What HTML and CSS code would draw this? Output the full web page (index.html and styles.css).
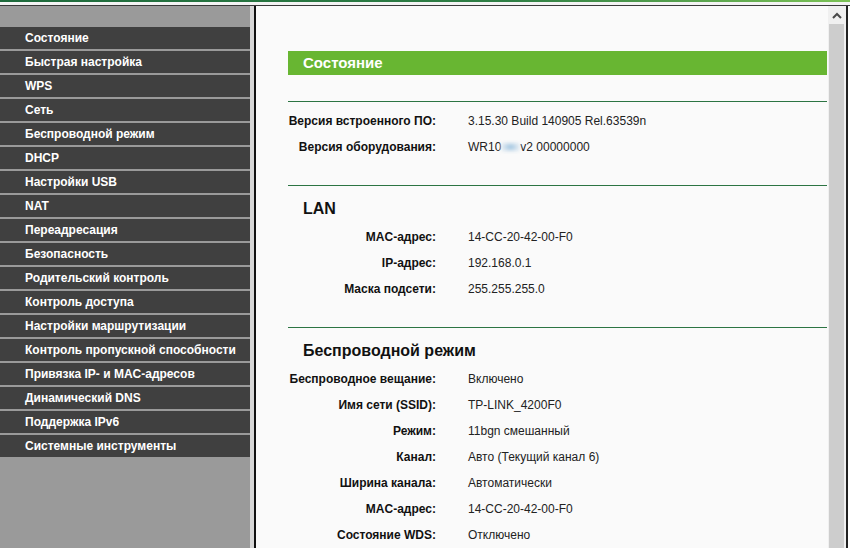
FILE: index.html
```html
<!DOCTYPE html>
<html lang="ru">
<head>
<meta charset="UTF-8">
<title>Состояние</title>
<link rel="stylesheet" href="styles.css">
</head>
<body>

<div class="topline"></div>

<div class="layout">
  <div class="menu">
    <div class="item">Состояние</div>
    <div class="item">Быстрая настройка</div>
    <div class="item">WPS</div>
    <div class="item">Сеть</div>
    <div class="item">Беспроводной режим</div>
    <div class="item">DHCP</div>
    <div class="item">Настройки USB</div>
    <div class="item">NAT</div>
    <div class="item">Переадресация</div>
    <div class="item">Безопасность</div>
    <div class="item">Родительский контроль</div>
    <div class="item">Контроль доступа</div>
    <div class="item">Настройки маршрутизации</div>
    <div class="item">Контроль пропускной способности</div>
    <div class="item">Привязка IP- и MAC-адресов</div>
    <div class="item">Динамический DNS</div>
    <div class="item">Поддержка IPv6</div>
    <div class="item">Системные инструменты</div>
  </div>

  <div class="frame">
    <div class="main">
      <div class="title">Состояние</div>

      <div class="block">
        <div class="rows">
          <div class="lbl">Версия встроенного ПО:</div><div class="val">3.15.30 Build 140905 Rel.63539n</div>
          <div class="lbl">Версия оборудования:</div><div class="val">WR10<span class="blur"></span>v2 00000000</div>
        </div>
      </div>

      <div class="block">
        <h2>LAN</h2>
        <div class="rows">
          <div class="lbl">MAC-адрес:</div><div class="val">14-CC-20-42-00-F0</div>
          <div class="lbl">IP-адрес:</div><div class="val">192.168.0.1</div>
          <div class="lbl">Маска подсети:</div><div class="val">255.255.255.0</div>
        </div>
      </div>

      <div class="block">
        <h2>Беспроводной режим</h2>
        <div class="rows">
          <div class="lbl">Беспроводное вещание:</div><div class="val">Включено</div>
          <div class="lbl">Имя сети (SSID):</div><div class="val">TP-LINK_4200F0</div>
          <div class="lbl">Режим:</div><div class="val">11bgn смешанный</div>
          <div class="lbl">Канал:</div><div class="val">Авто (Текущий канал 6)</div>
          <div class="lbl">Ширина канала:</div><div class="val">Автоматически</div>
          <div class="lbl">MAC-адрес:</div><div class="val">14-CC-20-42-00-F0</div>
          <div class="lbl">Состояние WDS:</div><div class="val">Отключено</div>
        </div>
      </div>
    </div>

    <div class="scroll">
      <div class="arrow">
        <svg width="10" height="7" viewBox="0 0 10 7"><path d="M1 6 L5 2 L9 6" fill="none" stroke="#4a4a4a" stroke-width="2"/></svg>
      </div>
      <div class="thumb"></div>
    </div>
  </div>
</div>

</body>
</html>
```

FILE: styles.css
```css
body {
  margin: 0;
  height: 548px;
  overflow: hidden;
  background: #ffffff;
  font-family: "Liberation Sans", Arial, sans-serif;
  font-size: 12px;
}

.topline {
  height: 2px;
  background: linear-gradient(90deg, #1e6a3c, #2f7f45 60%, #7cc256);
  border-bottom: 3px solid #f4f4f4;
}

.layout {
  display: flex;
  height: 543px;
  border-top: 1px solid #3a3a3a;
}

.menu {
  width: 250px;
  flex: none;
  background: #9a9a9a;
  padding-top: 21px;
  border-right: 4px solid #d6d6d6;
}

.item {
  height: 22px;
  line-height: 22px;
  margin-bottom: 2px;
  padding-left: 25px;
  background: #404040;
  color: #ffffff;
  font-weight: bold;
}

.frame {
  flex: 1;
  display: flex;
  background: #fafafa;
  border-left: 2px solid #111111;
  border-right: 2px solid #222222;
  margin-right: 2px;
}

.main {
  flex: 1;
  padding: 45px 1px 0 32px;
}

.title {
  height: 24px;
  line-height: 24px;
  background: #68b632;
  color: #ffffff;
  font-size: 15px;
  font-weight: bold;
  padding-left: 15px;
  margin-bottom: 26px;
}

.block {
  border-top: 1px solid #2c7443;
  padding: 6px 0 25px;
}

.block h2 {
  margin: 0;
  padding: 7px 0 5px 15px;
  height: 20px;
  line-height: 20px;
  font-size: 16px;
  color: #111111;
}

.rows {
  display: grid;
  grid-template-columns: 148px 1fr;
  column-gap: 32px;
  grid-auto-rows: 26px;
  align-items: center;
}

.lbl {
  text-align: right;
  font-weight: bold;
  color: #111111;
}

.val {
  color: #222222;
}

.blur {
  display: inline-block;
  width: 19px;
  height: 10px;
  vertical-align: -1px;
  background: radial-gradient(ellipse at center, #9cc3e0, #dfe9f1 60%, #f6f8fa);
  filter: blur(1.5px);
}

.scroll {
  width: 18px;
  flex: none;
  display: flex;
  flex-direction: column;
  background: #f0f0f0;
}

.arrow {
  height: 18px;
  display: flex;
  align-items: center;
  justify-content: center;
}

.thumb {
  flex: 1;
  margin: 0 2px 0 1px;
  background: #cdcdcd;
}
```
